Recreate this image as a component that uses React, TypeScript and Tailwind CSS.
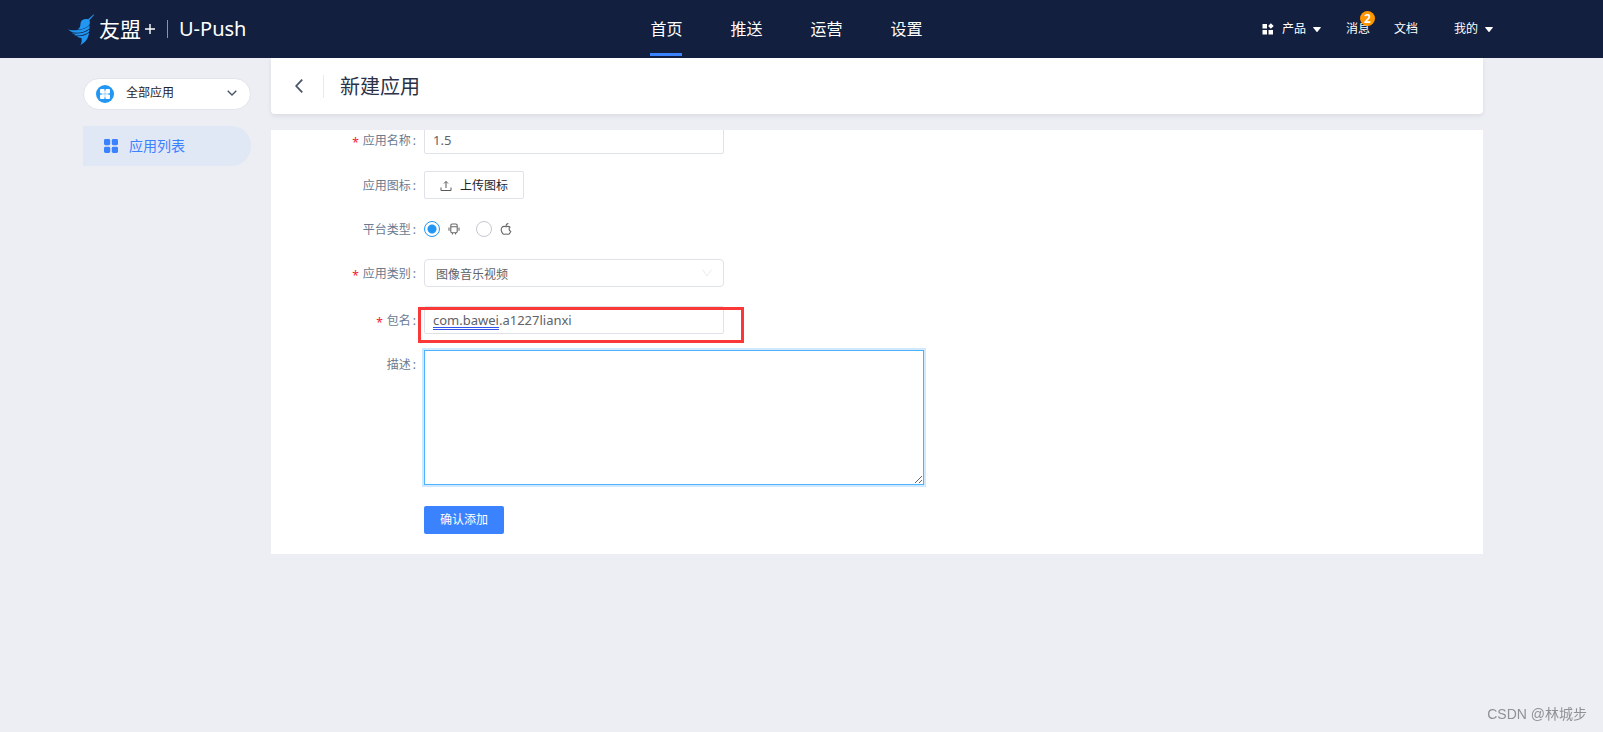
import { useState } from "react";
import type { ReactNode } from "react";

const navItems = ["首页", "推送", "运营", "设置"];

type FormRowProps = {
  label?: string;
  htmlFor?: string;
  required?: boolean;
  className?: string;
  children: ReactNode;
};

const FormRow = ({
  label,
  htmlFor,
  required,
  className = "",
  children,
}: FormRowProps) => (
  <div className={`flex items-start ${className}`}>
    <div className="flex h-7 w-[153px] shrink-0 items-center justify-end pr-2 pt-0.5 text-xs text-[#6b7a90]">
      {required && (
        <span className="mr-1 pt-1 text-xs leading-none text-[#f5222d]">*</span>
      )}
      {label && (
        <label htmlFor={htmlFor}>
          {label}
          <span className="ml-0.5">:</span>
        </label>
      )}
    </div>
    {children}
  </div>
);

const BirdLogo = () => (
  <svg viewBox="0 0 26 31" className="h-[31px] w-[26px]" fill="#2196f3">
    <path d="M26 0 L25.6 1.4 L21.4 6.2 C22.2 8 22 9.6 21.3 11 C18.4 14.2 14 15.6 9.4 15.4 C11.4 14.4 12.4 13 12.4 10.6 C12.4 7 14.2 5 17.6 4.9 C18.8 4.9 19.6 5 20.2 5.2 Z" />
    <path d="M0 15.4 C8 17.2 16.4 16.4 21.6 11.6 L21.5 14.6 C16.4 18.9 9 19.8 2 17.8 L4 17.3 C2.4 16.9 1 16.3 0 15.4 Z" />
    <path d="M3.6 19.2 C10.4 20.2 17 19.2 21.4 15.2 L21.1 17.8 C17 21.2 11.6 22 6.4 21.2 L7.2 20.5 C5.8 20.3 4.6 19.9 3.6 19.2 Z" />
    <path d="M8.6 22.2 C13.6 22.4 17.8 21.4 21 18.4 C20.6 24 17.4 28.4 12.4 31 C13.8 28.8 14 26.8 13.4 24 C11.6 23.8 10 23.2 8.6 22.2 Z" />
  </svg>
);

const Caret = () => (
  <svg viewBox="0 0 8 5" className="h-[5px] w-2" fill="currentColor">
    <path d="M0.4 0 H7.6 Q8 0.2 7.7 0.7 L4.5 4.7 Q4 5.1 3.5 4.7 L0.3 0.7 Q0 0.2 0.4 0 Z" />
  </svg>
);

const Header = () => (
  <header className="grid h-[58px] grid-cols-[1fr_auto_1fr] bg-[#121f3e] pl-[68px] pr-[110px] text-white">
    <a href="#" className="flex items-center">
      <BirdLogo />
      <span className="ml-[5px] text-[21px] leading-7">友盟</span>
      <svg
        viewBox="0 0 10 10"
        className="ml-1 size-2.5"
        stroke="currentColor"
        strokeWidth="1.4"
      >
        <path d="M5 0 V10 M0 5 H10" />
      </svg>
      <span className="ml-3 h-[18px] w-px bg-[#8b93a6]" />
      <span className="ml-[11px] text-xl">U-Push</span>
    </a>
    <nav className="flex gap-12 pl-3">
      {navItems.map((item, i) => (
        <a
          key={item}
          href="#"
          className={`mb-0.5 flex items-center border-b-3 pt-1 text-base ${
            i === 0 ? "border-[#3b82ff]" : "border-transparent"
          }`}
        >
          {item}
        </a>
      ))}
    </nav>
    <div className="flex items-center justify-end text-xs">
      <a href="#" className="flex items-center">
        <svg viewBox="0 0 12 12" className="mr-2 size-3" fill="currentColor">
          <path d="M0.5 1 h4.5 v4.5 h-4.5z M0.5 7 h4.5 v4.5 h-4.5z M6.5 7 h4.5 v4.5 h-4.5z M8.9 0.2 l2.8 2.8 l-2.8 2.8 l-2.8 -2.8z" />
        </svg>
        <span className="mr-[7px]">产品</span>
        <Caret />
      </a>
      <a href="#" className="relative ml-[25px]">
        消息
        <span className="absolute -top-2.5 left-3.5 flex size-[15px] items-center justify-center rounded-full bg-[#ff9500] text-xs font-bold">
          2
        </span>
      </a>
      <a href="#" className="ml-6">
        文档
      </a>
      <a href="#" className="ml-9 flex items-center">
        <span className="mr-[7px]">我的</span>
        <Caret />
      </a>
    </div>
  </header>
);

const Sidebar = () => (
  <aside className="w-[168px] shrink-0 pt-5">
    <div className="relative">
      <svg
        viewBox="0 0 18 18"
        className="absolute left-[13px] top-[7px] size-[18px]"
      >
        <circle cx="9" cy="9" r="9" fill="#2196f3" />
        <g fill="#fff">
          <rect x="4" y="4" width="4.6" height="4.6" rx="1" />
          <rect x="9.4" y="4" width="4.6" height="4.6" rx="1" />
          <rect x="4" y="9.4" width="4.6" height="4.6" rx="1" />
          <rect x="9.4" y="9.4" width="4.6" height="4.6" rx="1" />
          <rect x="6" y="6" width="6" height="6" fillOpacity="0.6" />
        </g>
      </svg>
      <select
        aria-label="应用"
        className="h-8 w-full appearance-none rounded-full border border-[#e1e4ec] bg-white pb-0.5 pl-[42px] text-xs text-[#1f2329]"
      >
        <option>全部应用</option>
      </select>
      <svg
        viewBox="0 0 10 6"
        className="pointer-events-none absolute right-3.5 top-3 h-1.5 w-2.5"
        fill="none"
        stroke="#4a5468"
        strokeWidth="1.4"
      >
        <path d="M0.7 0.7 L5 5 L9.3 0.7" />
      </svg>
    </div>
    <a
      href="#"
      className="mt-4 flex h-10 items-center rounded-r-full bg-[#e0e7f5] pl-[21px] text-sm text-[#3b82ff]"
    >
      <svg
        viewBox="0 0 14 14"
        className="mr-[11px] size-3.5"
        fill="currentColor"
      >
        <rect width="6.2" height="6.2" rx="1.4" />
        <rect x="7.8" width="6.2" height="6.2" rx="1.4" />
        <rect y="7.8" width="6.2" height="6.2" rx="1.4" />
        <rect x="7.8" y="7.8" width="6.2" height="6.2" rx="1.4" />
      </svg>
      应用列表
    </a>
  </aside>
);

const radioClass =
  "size-4 appearance-none rounded-full border border-[#c5c8d0] bg-white checked:border-[#2196f3] checked:bg-[radial-gradient(circle,#2196f3_4px,#fff_5px)]";
const inputClass =
  "h-7 w-full rounded-xs border border-[#dfe2e8] bg-white px-2 text-[13px] text-[#606266] outline-none";

const AppForm = () => {
  const [name, setName] = useState("1.5");
  const [platform, setPlatform] = useState("android");
  const [packageName, setPackageName] = useState("com.bawei.a1227lianxi");

  return (
    <form className="-mt-1 pb-5" onSubmit={(e) => e.preventDefault()}>
      <FormRow label="应用名称" htmlFor="name" required>
        <div className="w-[300px]">
          <input
            id="name"
            value={name}
            onChange={(e) => setName(e.target.value)}
            className={inputClass}
          />
        </div>
      </FormRow>

      <FormRow label="应用图标" htmlFor="icon" className="mt-[17px]">
        <button
          id="icon"
          type="button"
          className="flex h-7 w-[100px] items-center justify-center gap-2 rounded-xs border border-[#dfe2e8] pt-0.5 text-xs text-[#1f2329]"
        >
          <svg
            viewBox="0 0 12 12"
            className="size-3"
            fill="none"
            stroke="#595959"
          >
            <path d="M1 7.5 V10.5 H11 V7.5 M6 8 V1.5 M4 3.5 L6 1.5 L8 3.5" />
          </svg>
          上传图标
        </button>
      </FormRow>

      <FormRow label="平台类型" htmlFor="android" className="mt-4">
        <div className="flex h-7 items-center gap-4">
          <label className="flex items-center gap-2">
            <input
              id="android"
              type="radio"
              name="platform"
              aria-label="Android"
              checked={platform === "android"}
              onChange={() => setPlatform("android")}
              className={radioClass}
            />
            <svg
              viewBox="0 0 12 12"
              className="size-3"
              fill="none"
              stroke="#666"
              strokeWidth="1.1"
            >
              <path d="M2.8 3.8 H9.2 V8.6 Q9.2 9.8 8 9.8 H4 Q2.8 9.8 2.8 8.6 Z M2.8 3.8 V2.4 Q2.8 1 4.2 1 H7.8 Q9.2 1 9.2 2.4 V3.8 M1 4.4 V7.8 M11 4.4 V7.8 M4.4 9.8 V11.6 M7.6 9.8 V11.6" />
            </svg>
          </label>
          <label className="flex items-center gap-2">
            <input
              type="radio"
              name="platform"
              aria-label="iOS"
              checked={platform === "ios"}
              onChange={() => setPlatform("ios")}
              className={radioClass}
            />
            <svg
              viewBox="0 0 12 12"
              className="size-3"
              fill="none"
              stroke="#666"
              strokeWidth="1.1"
            >
              <path d="M10 4.2 C8.8 3 7.4 3.2 6 3.8 C4.4 3.2 3 3.2 2 4.4 C0.4 6.4 1.6 9.6 3.2 11 C4.2 11.8 5 11 6 11 C7 11 8 11.8 9 11 C9.8 10.2 10.4 9.4 10.8 8.4 C8.8 7.4 8.6 5.4 10 4.2 Z M6 3 C6 1.6 7 0.6 8.4 0.4" />
            </svg>
          </label>
        </div>
      </FormRow>

      <FormRow label="应用类别" htmlFor="category" required className="mt-4">
        <div className="relative w-[300px]">
          <select
            id="category"
            className="h-7 w-full appearance-none rounded border border-[#dfe2e8] bg-white pl-[11px] pt-1 text-xs text-[#606266]"
          >
            <option>图像音乐视频</option>
          </select>
          <svg
            viewBox="0 0 10 8"
            className="pointer-events-none absolute right-3 top-2.5 h-2 w-2.5"
            fill="none"
            stroke="#e9ebef"
          >
            <path d="M0.5 0.5 L5 7 L9.5 0.5" />
          </svg>
        </div>
      </FormRow>

      <FormRow label="包名" htmlFor="package" required className="mt-[19px]">
        <div className="relative w-[300px]">
          <input
            id="package"
            value={packageName}
            spellCheck={false}
            onChange={(e) => setPackageName(e.target.value)}
            className={inputClass}
          />
          {/* double underline below the suspicious part of the name */}
          <span className="pointer-events-none absolute left-[9px] top-[21px] h-[3px] w-[66px] border-y border-[#3355e8]" />
          <span className="pointer-events-none absolute -left-1.5 top-px h-9 w-[326px] border-3 border-[#fb3838]" />
        </div>
      </FormRow>

      <FormRow label="描述" htmlFor="description" className="mt-4">
        <textarea
          id="description"
          className="block h-[135px] w-[500px] resize rounded-none border border-[#4db3ff] bg-white p-2 text-sm shadow-[0_0_0_2px_#d0e9ff] outline-none"
        />
      </FormRow>

      <FormRow className="mt-[21px]">
        <button
          type="submit"
          className="h-7 w-20 rounded-xs bg-[#3b82ff] text-xs text-white"
        >
          确认添加
        </button>
      </FormRow>
    </form>
  );
};

export default function App() {
  return (
    <div className="min-h-screen bg-[#edeef4] font-['Noto_Sans','Noto_Sans_CJK_SC',sans-serif]">
      <Header />
      <div className="flex gap-5 pl-[83px] pr-[120px]">
        <Sidebar />
        <main className="min-w-0 flex-1">
          <div className="flex h-14 items-center rounded-b-sm bg-white pl-6 shadow-[0_2px_4px_rgba(0,0,0,0.08)]">
            <button type="button" aria-label="返回">
              <svg
                viewBox="0 0 8 14"
                className="h-3.5 w-2"
                fill="none"
                stroke="#4a5468"
                strokeWidth="1.8"
              >
                <path d="M7.2 0.6 L1.2 7 L7.2 13.4" />
              </svg>
            </button>
            <span className="ml-5 h-[23px] w-px bg-[#e8eaf0]" />
            <h1 className="ml-4 pt-0.5 text-xl text-[#2b3248]">新建应用</h1>
          </div>
          <section className="mt-4 overflow-hidden bg-white">
            <AppForm />
          </section>
        </main>
      </div>
      <p className="fixed bottom-2 right-4 font-['Liberation_Sans','Noto_Sans_CJK_SC',sans-serif] text-sm text-[#8f9196]">
        CSDN @林城步
      </p>
    </div>
  );
}
